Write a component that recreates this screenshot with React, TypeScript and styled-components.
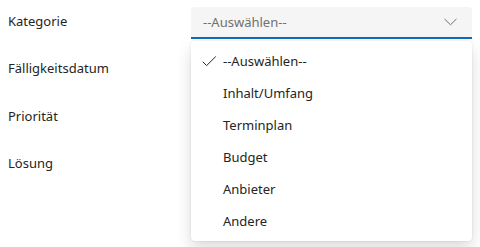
import React from "react";
import styled, { createGlobalStyle } from "styled-components";

const GlobalStyle = createGlobalStyle`
  html, body, #root {
    height: 100%;
  }
  body {
    margin: 0;
    background: #ffffff;
    font-family: "Noto Sans", "Open Sans", Arial, sans-serif;
    font-size: 13px;
    color: #242424;
  }
`;

const Form = styled.div`
  display: flex;
  flex-direction: column;
  gap: 15.5px;
  padding: 7px 8px 0 8px;
  width: 464px;
  min-height: 247px;
  box-sizing: border-box;
`;

const Row = styled.div`
  display: grid;
  grid-template-columns: 183px 281px;
  align-items: center;
  height: 32px;
`;

const Label = styled.label`
  font-size: 13px;
  line-height: 20px;
  padding-bottom: 5px;
  color: #242424;
`;

const Field = styled.div`
  position: relative;
`;

const Trigger = styled.button`
  display: flex;
  align-items: center;
  justify-content: space-between;
  width: 100%;
  height: 32px;
  padding: 0 15px 0 12px;
  box-sizing: border-box;
  border: none;
  border-radius: 4px 4px 0 0;
  border-bottom: 2px solid #0f6cbd;
  background: #f5f5f5;
  font-family: inherit;
  font-size: 13px;
  color: #707070;
  cursor: pointer;
  text-align: left;
`;

const Listbox = styled.ul`
  position: absolute;
  top: calc(100% + 2px);
  left: 0;
  right: 0;
  margin: 0;
  padding: 4px 0;
  list-style: none;
  background: #ffffff;
  border-radius: 4px;
  box-shadow: 0 0 2px rgba(0, 0, 0, 0.12), 0 8px 16px rgba(0, 0, 0, 0.14);
  z-index: 2;
`;

const Option = styled.li<{ $selected?: boolean }>`
  display: flex;
  align-items: center;
  height: 32px;
  padding-left: 11px;
  font-size: 13px;
  color: #242424;
  cursor: pointer;
`;

const CheckSlot = styled.span`
  display: inline-flex;
  width: 21px;
  justify-content: flex-start;
`;

const Chevron = () => (
  <svg width="13" height="8" viewBox="0 0 13 8" aria-hidden="true">
    <path d="M0.8 1.2 6.5 6.8 12.2 1.2" fill="none" stroke="#707070" strokeWidth="1" strokeLinecap="round" strokeLinejoin="round" />
  </svg>
);

const Check = () => (
  <svg width="15" height="11" viewBox="0 0 15 11" aria-hidden="true">
    <path d="M1 6 4.6 9.6 13.5 0.8" fill="none" stroke="#242424" strokeWidth="1" strokeLinecap="round" strokeLinejoin="round" />
  </svg>
);

const options = ["--Auswählen--", "Inhalt/Umfang", "Terminplan", "Budget", "Anbieter", "Andere"];

export default function App() {
  return (
    <>
      <GlobalStyle />
      <Form>
        <Row>
          <Label>Kategorie</Label>
          <Field>
            <Trigger>
              <span>--Auswählen--</span>
              <Chevron />
            </Trigger>
            <Listbox role="listbox">
              {options.map((o, i) => (
                <Option key={o} $selected={i === 0}>
                  <CheckSlot>{i === 0 && <Check />}</CheckSlot>
                  {o}
                </Option>
              ))}
            </Listbox>
          </Field>
        </Row>
        <Row>
          <Label>Fälligkeitsdatum</Label>
        </Row>
        <Row>
          <Label>Priorität</Label>
        </Row>
        <Row>
          <Label>Lösung</Label>
        </Row>
      </Form>
    </>
  );
}
